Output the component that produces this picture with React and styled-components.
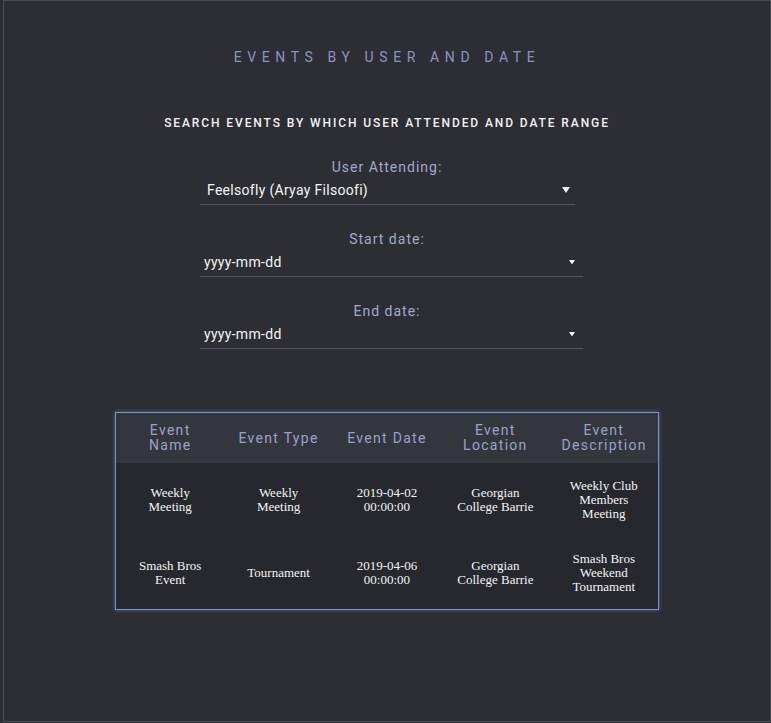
import styled, { createGlobalStyle } from "styled-components";

const GlobalStyle = createGlobalStyle`
  body {
    margin: 0;
    background: #2c2e33;
    font-family: Roboto, "Liberation Sans", sans-serif;
  }
`;

const Page = styled.div`
  box-sizing: border-box;
  margin-left: 3px;
  width: 768px;
  height: 722px;
  border: 1px solid #4b4c51;
  background: #2c2e33;
  padding-top: 46px;
`;

const Title = styled.h1`
  margin: 0;
  text-align: center;
  font-size: 14px;
  line-height: 20px;
  font-weight: 400;
  letter-spacing: 5.6px;
  color: #8b94c0;
`;

const Subtitle = styled.h2`
  margin: 48px 0 0;
  text-align: center;
  font-size: 12px;
  line-height: 16px;
  font-weight: 500;
  letter-spacing: 1.9px;
  color: #f2f2f4;
`;

const Form = styled.div`
  margin-top: 27px;
  display: flex;
  flex-direction: column;
  gap: 25px;
`;

const Field = styled.div`
  display: flex;
  flex-direction: column;
`;

const Label = styled.label`
  text-align: center;
  font-size: 14px;
  line-height: 18px;
  letter-spacing: 1px;
  color: #a3a8cf;
`;

const InputBox = styled.div`
  box-sizing: border-box;
  margin-left: 196px;
  width: ${(p) => p.$width}px;
  height: ${(p) => p.$height}px;
  padding-left: ${(p) => p.$pad}px;
  padding-right: ${(p) => p.$padRight}px;
  border-bottom: 1px solid #55575d;
  display: flex;
  align-items: center;
  justify-content: space-between;
  color: #f4f4f6;
  font-size: 14px;
  letter-spacing: 0.3px;
`;

const Arrow = ({ size }) => (
  <svg width={size} height={size * 0.75} viewBox="0 0 8 6">
    <path d="M0 0 H8 L4 6 Z" fill="#f0f0f0" />
  </svg>
);

const TableWrap = styled.div`
  margin: 63px auto 0;
  width: 544px;
  box-sizing: border-box;
  border: 1px solid #7f8fd6;
  box-shadow: 0 0 4px rgba(125, 145, 220, 0.55);
  background: #26282d;
`;

const Table = styled.table`
  width: 100%;
  border-collapse: collapse;
  table-layout: fixed;
`;

const Th = styled.th`
  background: #34363d;
  height: 50px;
  padding: 0 12px;
  font-weight: 400;
  font-size: 14px;
  line-height: 15px;
  letter-spacing: 1.3px;
  color: #9aa1cb;
  text-align: center;
`;

const Td = styled.td`
  height: 73px;
  padding: 0 12px;
  font-family: "Liberation Serif", "Times New Roman", serif;
  font-size: 13px;
  line-height: 14px;
  color: #f4f4f4;
  text-align: center;
  vertical-align: middle;
`;

const headers = [
  "Event Name",
  "Event Type",
  "Event Date",
  "Event Location",
  "Event Description",
];

const events = [
  [
    "Weekly Meeting",
    "Weekly Meeting",
    "2019-04-02 00:00:00",
    "Georgian College Barrie",
    "Weekly Club Members Meeting",
  ],
  [
    "Smash Bros Event",
    "Tournament",
    "2019-04-06 00:00:00",
    "Georgian College Barrie",
    "Smash Bros Weekend Tournament",
  ],
];

const App = () => {
  return (
    <>
      <GlobalStyle />
      <Page>
        <Title>EVENTS BY USER AND DATE</Title>
        <Subtitle>SEARCH EVENTS BY WHICH USER ATTENDED AND DATE RANGE</Subtitle>
        <Form>
          <Field>
            <Label>User Attending:</Label>
            <InputBox $width={375} $height={29} $pad={7} $padRight={5}>
              <span>Feelsofly (Aryay Filsoofi)</span>
              <Arrow size={8} />
            </InputBox>
          </Field>
          <Field>
            <Label>Start date:</Label>
            <InputBox $width={383} $height={29} $pad={4} $padRight={8}>
              <span>yyyy-mm-dd</span>
              <Arrow size={6} />
            </InputBox>
          </Field>
          <Field>
            <Label>End date:</Label>
            <InputBox $width={383} $height={29} $pad={4} $padRight={8}>
              <span>yyyy-mm-dd</span>
              <Arrow size={6} />
            </InputBox>
          </Field>
        </Form>
        <TableWrap>
          <Table>
            <thead>
              <tr>
                {headers.map((h) => (
                  <Th key={h}>{h}</Th>
                ))}
              </tr>
            </thead>
            <tbody>
              {events.map((row, i) => (
                <tr key={i}>
                  {row.map((cell, j) => (
                    <Td key={j}>{cell}</Td>
                  ))}
                </tr>
              ))}
            </tbody>
          </Table>
        </TableWrap>
      </Page>
    </>
  );
};

export default App;
